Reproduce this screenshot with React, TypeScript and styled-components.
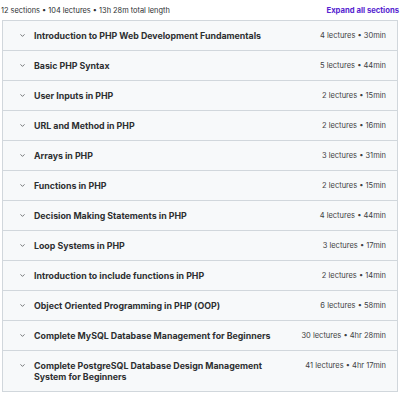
import styled, { createGlobalStyle } from "styled-components"

const sections = [
  { title: "Introduction to PHP Web Development Fundamentals", lectures: 4, length: "30min" },
  { title: "Basic PHP Syntax", lectures: 5, length: "44min" },
  { title: "User Inputs in PHP", lectures: 2, length: "15min" },
  { title: "URL and Method in PHP", lectures: 2, length: "16min" },
  { title: "Arrays in PHP", lectures: 3, length: "31min" },
  { title: "Functions in PHP", lectures: 2, length: "15min" },
  { title: "Decision Making Statements in PHP", lectures: 4, length: "44min" },
  { title: "Loop Systems in PHP", lectures: 3, length: "17min" },
  { title: "Introduction to include functions in PHP", lectures: 2, length: "14min" },
  { title: "Object Oriented Programming in PHP (OOP)", lectures: 6, length: "58min" },
  { title: "Complete MySQL Database Management for Beginners", lectures: 30, length: "4hr 28min" },
  { title: "Complete PostgreSQL Database Design Management System for Beginners", lectures: 41, length: "4hr 17min" },
]

const Chevron = () => (
  <svg width="7" height="7" viewBox="0 0 24 24" fill="none" stroke="#3e4143" strokeWidth="2.4" strokeLinecap="round" strokeLinejoin="round">
    <path d="M6 9l6 6 6-6" />
  </svg>
)

const App = () => {
  return (
    <Page>
      <GlobalStyle />
      <Header>
        <Summary>12 sections • 104 lectures • 13h 28m total length</Summary>
        <ExpandAll>Expand all sections</ExpandAll>
      </Header>
      <List>
        {sections.map(({ title, lectures, length }) => (
          <Row key={title}>
            <ChevronBox><Chevron /></ChevronBox>
            <Title>{title}</Title>
            <Meta>{lectures} lectures • {length}</Meta>
          </Row>
        ))}
      </List>
    </Page>
  )
}

const GlobalStyle = createGlobalStyle`
  body {
    margin: 0;
    background: #ffffff;
  }
`

const Page = styled.div`
  font-family: Inter, "Noto Sans", sans-serif;
  color: #2d2f31;
  padding: 0 2px;
`

const Header = styled.div`
  display: flex;
  justify-content: space-between;
  align-items: center;
  height: 20px;
  margin: 0 -1px;
`

const Summary = styled.span`
  font-size: 7.4px;
  color: #2d2f31;
`

const ExpandAll = styled.span`
  font-size: 7.7px;
  font-weight: 700;
  color: #5624d0;
`

const List = styled.div`
  border: 1px solid #d1d7dc;
  border-bottom: none;
`

const Row = styled.div`
  display: flex;
  align-items: flex-start;
  background: #f7f9fa;
  border-bottom: 1px solid #d1d7dc;
  padding: 9px 11px 8.5px 16px;
  box-sizing: border-box;
  min-height: 30px;
`

const ChevronBox = styled.span`
  display: flex;
  align-items: center;
  height: 11px;
  width: 15px;
  flex-shrink: 0;
`

const Title = styled.span`
  flex: 1;
  max-width: 250px;
  font-size: 8.8px;
  font-weight: 700;
  line-height: 11px;
`

const Meta = styled.span`
  margin-left: auto;
  font-size: 7.5px;
  color: #3e4143;
  white-space: nowrap;
  line-height: 11px;
`

export default App
